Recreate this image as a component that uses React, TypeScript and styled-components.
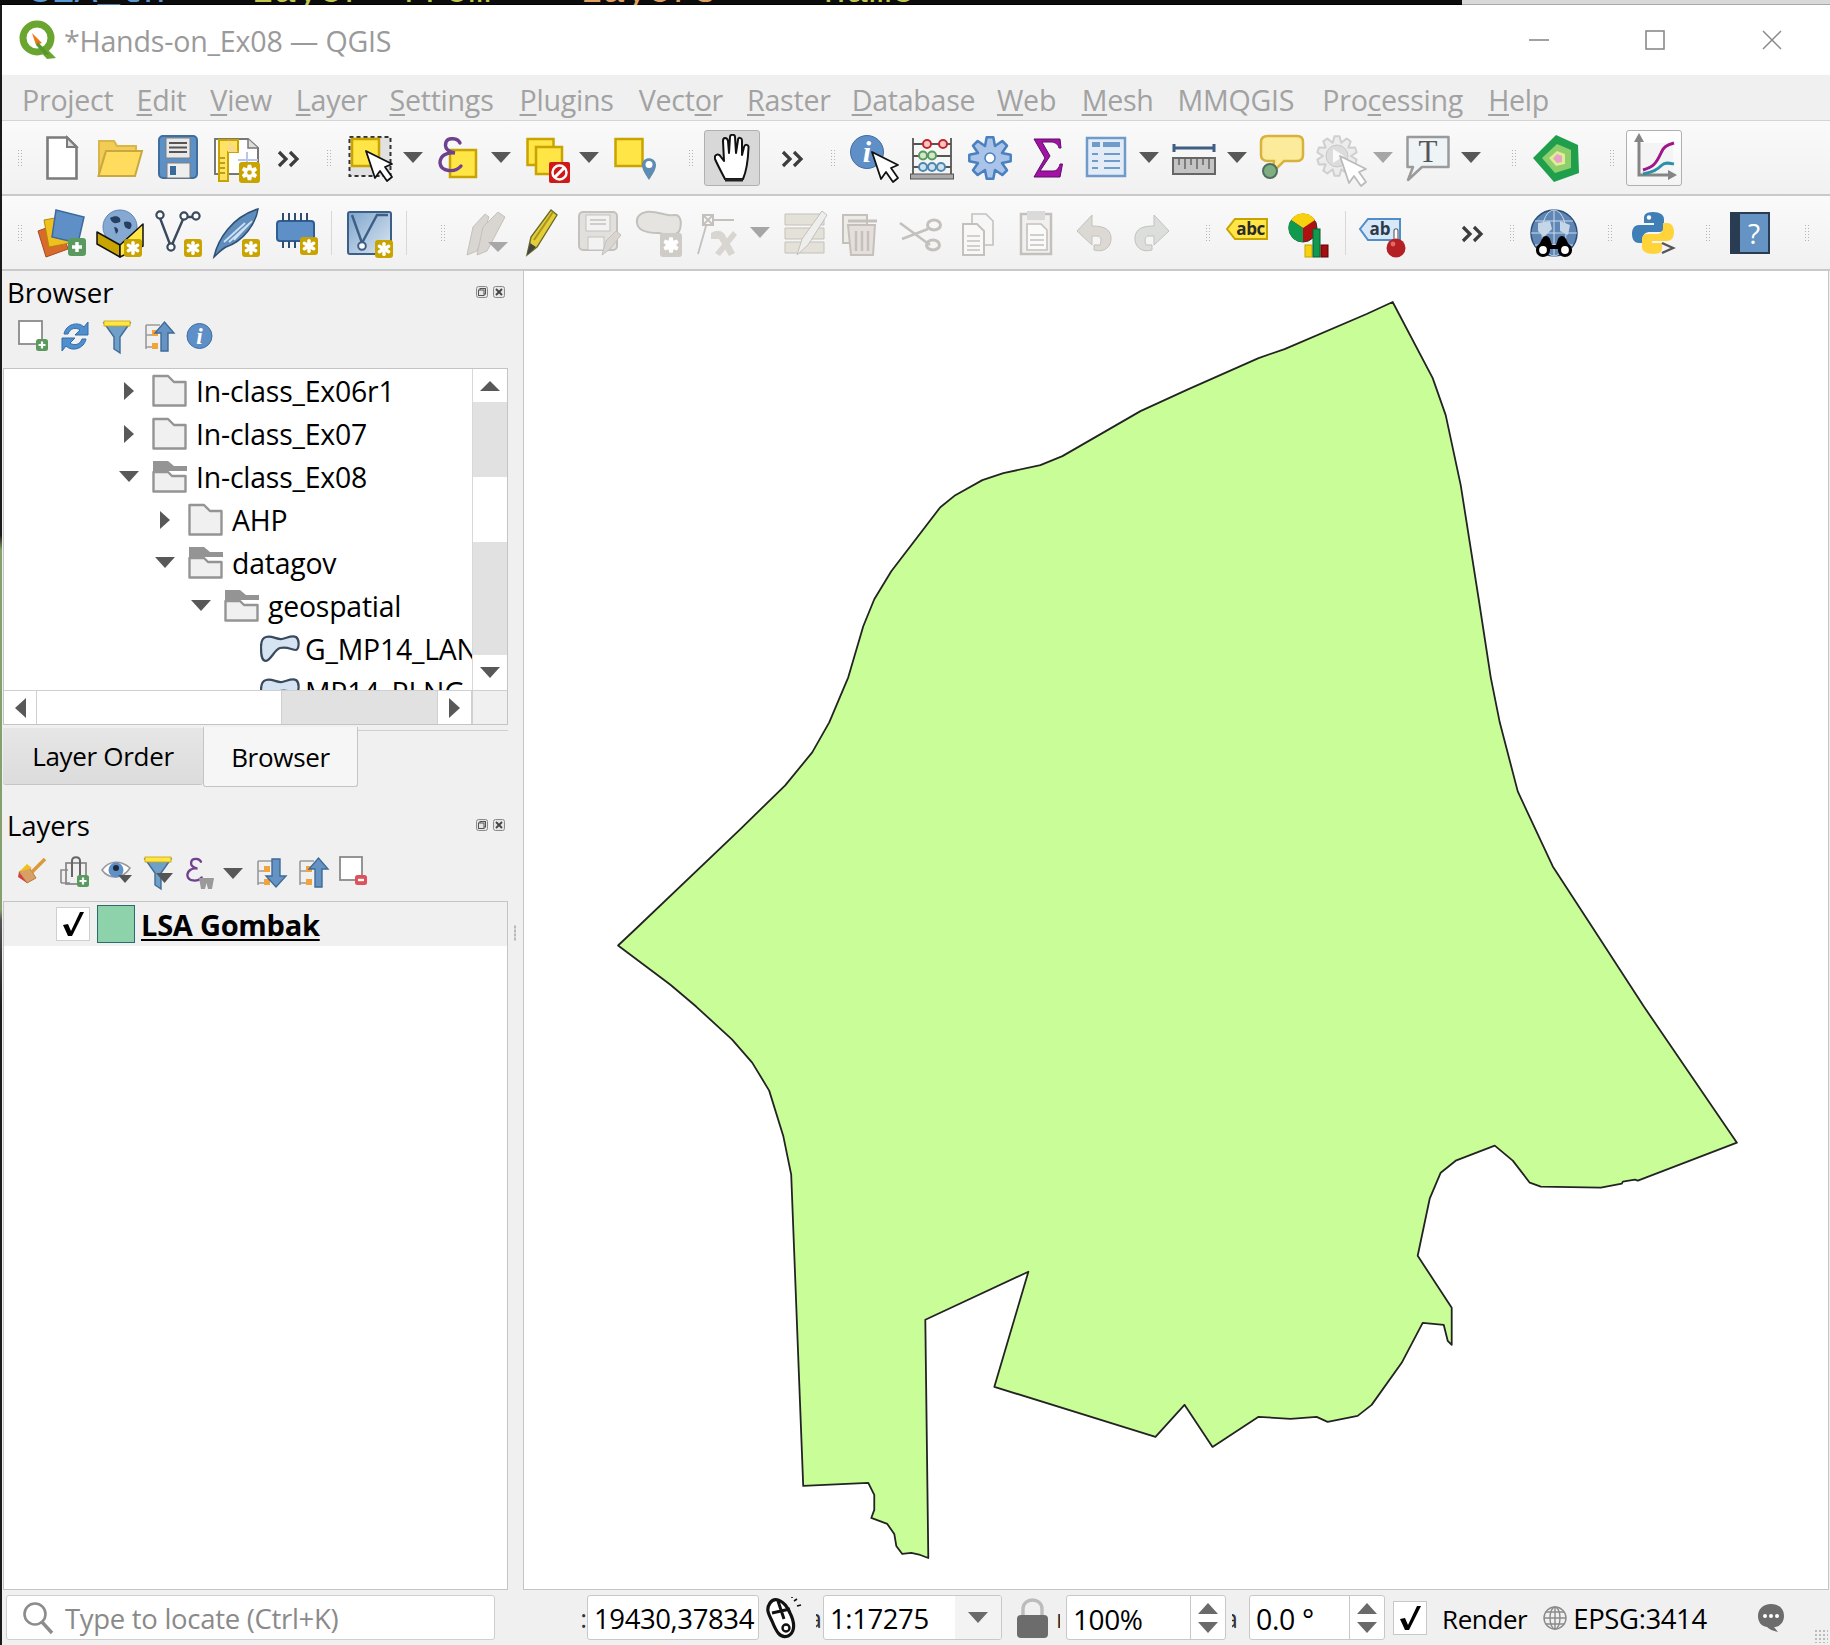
import * as React from "react";
import styled, { createGlobalStyle } from "styled-components";

const FONT = `"Open Sans", "Noto Sans", sans-serif`;

const GlobalStyle = createGlobalStyle`
  html, body { margin: 0; padding: 0; background: #f0f0f0; }
  * { box-sizing: border-box; }
`;

const Screen = styled.div`
  width: 1830px;
  height: 1645px;
  display: flex;
  flex-direction: column;
  overflow: hidden;
  font-family: ${FONT};
  color: #000;
`;

const TopStrip = styled.div`
  height: 5px;
  display: flex;
  overflow: hidden;
  flex: none;
`;

const TerminalPeek = styled.div`
  width: 1462px;
  background: #0c0c0c;
  display: flex;
  font-family: "Liberation Mono", monospace;
  font-size: 38px;
  line-height: 38px;
  white-space: pre;
  border-bottom: 1px solid #000;
`;

const PeekWord = styled.span<{ $color: string; $gap: number }>`
  color: ${(p) => p.$color};
  margin-top: -27px;
  margin-left: ${(p) => p.$gap}px;
`;

const DesktopPeek = styled.div`
  flex: 1;
  background: #d9d9d9;
  border-bottom: 1px solid #a8a8a8;
`;

const Body = styled.div`
  flex: 1;
  display: flex;
  min-height: 0;
`;

const LeftEdge = styled.div`
  width: 2px;
  flex: none;
  background: linear-gradient(
    #1a1a1a 0,
    #1a1a1a 530px,
    #86a06c 545px,
    #86a06c 905px,
    #555 915px,
    #1a1a1a 1000px
  );
`;

const Window = styled.div`
  flex: 1;
  display: flex;
  flex-direction: column;
  min-width: 0;
  background: #f0f0f0;
`;

const TitleBar = styled.div`
  height: 70px;
  flex: none;
  background: #fff;
  display: flex;
  align-items: center;
  padding-left: 16px;
`;

const TitleText = styled.div`
  margin-left: 6px;
  font-size: 28.6px;
  color: #9a9a9a;
  letter-spacing: -0.2px;
`;

const WinControls = styled.div`
  margin-left: auto;
  display: flex;
`;

const WinButton = styled.div`
  width: 116.5px;
  height: 70px;
  display: flex;
  align-items: center;
  justify-content: center;
`;

const MenuBar = styled.div`
  height: 46px;
  flex: none;
  background: #f0f0f0;
  border-bottom: 1px solid #d4d4d4;
  display: flex;
  align-items: center;
  padding-top: 3px;
`;

const MenuItem = styled.div<{ $gap: number }>`
  margin-left: ${(p) => p.$gap}px;
  font-size: 28.6px;
  letter-spacing: -0.25px;
  color: #a2a2a2;
  white-space: nowrap;
  u { text-underline-offset: 3px; text-decoration-thickness: 1.5px; }
`;

const Toolbar = styled.div<{ $h: number }>`
  height: ${(p) => p.$h}px;
  flex: none;
  display: flex;
  align-items: center;
  background: linear-gradient(#fafafa, #f1f1f1);
  border-bottom: 2px solid #c9c9c9;
`;

const Slot = styled.div<{ $w: number; $gap: number }>`
  width: ${(p) => p.$w}px;
  margin-left: ${(p) => p.$gap}px;
  flex: none;
  display: flex;
  align-items: center;
  justify-content: center;
`;

const ArrowSlot = styled(Slot)`
  height: 36px;
`;

const Handle = styled.div`
  width: 7px;
  height: 18px;
  background-image: radial-gradient(#b4b4b4 0.8px, transparent 1px);
  background-size: 3px 3px;
`;

const ToolSep = styled.div`
  width: 1px;
  height: 44px;
  background: #d8d8d8;
`;

const DropArrow = styled.div<{ $off?: boolean }>`
  width: 0;
  height: 0;
  border-left: 10px solid transparent;
  border-right: 10px solid transparent;
  border-top: 11px solid ${(p) => (p.$off ? "#a6a6a6" : "#585858")};
`;

const PressedButton = styled.div<{ $active?: boolean }>`
  width: 56px;
  height: 56px;
  border: 1px solid #b0b0b0;
  border-radius: 3px;
  background: ${(p) => (p.$active ? "#d8d8d8" : "linear-gradient(#fff, #f4f4f4)")};
  display: flex;
  align-items: center;
  justify-content: center;
`;

const Main = styled.div`
  flex: 1;
  display: flex;
  min-height: 0;
`;

const Dock = styled.div`
  width: 521px;
  flex: none;
  display: flex;
  flex-direction: column;
  padding-left: 1px;
  position: relative;
`;

const DockGrip = styled.div`
  position: absolute;
  left: 512px;
  top: 654px;
  width: 2px;
  height: 16px;
  background-image: radial-gradient(#b8b8b8 0.8px, transparent 1px);
  background-size: 2px 4px;
`;

const DockTitle = styled.div`
  height: 47px;
  flex: none;
  width: 505px;
  display: flex;
  align-items: center;
  padding: 0 3px 6px 4px;
  font-size: 27.6px;
  letter-spacing: -0.1px;
`;

const DockButtons = styled.div`
  margin-left: auto;
  display: flex;
  gap: 5px;
`;

const DockIcons = styled.div<{ $h: number; $top: number }>`
  height: ${(p) => p.$h}px;
  padding-top: ${(p) => p.$top}px;
  flex: none;
  display: flex;
  align-items: flex-start;
`;

const TreeFrame = styled.div`
  width: 505px;
  height: 357px;
  flex: none;
  border: 1px solid #c4c4c4;
  background: #fff;
  display: grid;
  grid-template-columns: 1fr 35px;
  grid-template-rows: 321px 1fr;
`;

const TreeView = styled.div`
  overflow: hidden;
`;

const TreeRow = styled.div<{ $level: number }>`
  height: 43px;
  display: flex;
  align-items: center;
  padding-left: ${(p) => 115 + p.$level * 36}px;
  font-size: 28.4px;
  letter-spacing: -0.2px;
  white-space: nowrap;
  svg { flex: none; }
`;

const ExpandCell = styled.div`
  width: 20px;
  flex: none;
  display: flex;
  justify-content: center;
  margin-right: 13px;
`;

const ArrowRight = styled.div`
  border-top: 9px solid transparent;
  border-bottom: 9px solid transparent;
  border-left: 10px solid #585858;
`;

const ArrowDown = styled.div`
  border-left: 10px solid transparent;
  border-right: 10px solid transparent;
  border-top: 11px solid #585858;
`;

const RowLabel = styled.span`
  margin-left: 9px;
`;

const LeafLabel = styled.span`
  margin-left: 4px;
`;

const ScrollColumn = styled.div`
  display: flex;
  flex-direction: column;
  border-left: 1px solid #d8d8d8;
`;

const ScrollRow = styled.div`
  display: flex;
  border-top: 1px solid #cfcfcf;
`;

const ScrollPart = styled.div<{ $size: number; $horizontal?: boolean; $grey?: boolean }>`
  flex: none;
  ${(p) => (p.$horizontal ? `width: ${p.$size}px; border-right: 1px solid #d0d0d0;` : `height: ${p.$size}px;`)}
  background: ${(p) => (p.$grey ? "#e1e1e1" : "#fff")};
  display: flex;
  align-items: center;
  justify-content: center;
`;

const ArrowUp = styled.div`
  border-left: 10px solid transparent;
  border-right: 10px solid transparent;
  border-bottom: 10px solid #585858;
`;

const ArrowLeft = styled.div`
  border-top: 10px solid transparent;
  border-bottom: 10px solid transparent;
  border-right: 11px solid #585858;
`;

const ArrowSmallRight = styled(ArrowLeft)`
  border-right: 0;
  border-left: 11px solid #585858;
`;

const ScrollCorner = styled.div`
  background: #f0f0f0;
  border-top: 1px solid #cfcfcf;
  border-left: 1px solid #d0d0d0;
`;

const TabBar = styled.div`
  height: 60px;
  margin-top: 2px;
  width: 505px;
  flex: none;
  display: flex;
`;

const Tab = styled.div<{ $active?: boolean; $w: number }>`
  width: ${(p) => p.$w}px;
  height: ${(p) => (p.$active ? 60 : 57)}px;
  margin-top: ${(p) => (p.$active ? 0 : 1)}px;
  display: flex;
  align-items: center;
  justify-content: center;
  font-size: 26px;
  letter-spacing: -0.3px;
  background: ${(p) => (p.$active ? "#f6f6f6" : "linear-gradient(#e6e6e6, #dcdcdc)")};
  border: 1px solid #c4c4c4;
  border-width: ${(p) => (p.$active ? "0 1px 1px 1px" : "0 0 1px 0")};
  border-radius: 0 0 3px 3px;
`;

const TabFill = styled.div`
  flex: 1;
  height: 4px;
  border-bottom: 1px solid #cfcfcf;
`;

const SplitterRow = styled.div`
  height: 17px;
  flex: none;
  width: 505px;
  display: flex;
  justify-content: center;
  padding-top: 8px;
`;

const SplitterDots = styled.div`
  width: 24px;
  height: 2px;
  background-image: radial-gradient(#b8b8b8 0.8px, transparent 1px);
  background-size: 4px 2px;
`;

const LayerFrame = styled.div`
  width: 505px;
  flex: 1;
  background: #fff;
  border: 1px solid #c4c4c4;
`;

const LayerRow = styled.div`
  height: 44px;
  background: #f0f0f0;
  display: flex;
  align-items: center;
  padding-left: 52px;
`;

const LayerCheck = styled.div`
  width: 34px;
  height: 34px;
  background: #fff;
  border: 1px solid #cfcfcf;
  display: flex;
  align-items: center;
  justify-content: center;
`;

const LayerSwatch = styled.div`
  width: 38px;
  height: 38px;
  margin-left: 7px;
  background: #8dd2ab;
  border: 1.5px solid #2c6a70;
`;

const LayerName = styled.div`
  margin-left: 6px;
  font-weight: 700;
  font-size: 29px;
  letter-spacing: -0.25px;
  text-decoration: underline;
  text-decoration-thickness: 2px;
  text-underline-offset: 3px;
`;

const MapCanvas = styled.div`
  flex: 1;
  background: #fff;
  border: 1px solid #c4c4c4;
  border-top: 0;
  margin-right: 1px;
  min-width: 0;
`;

const MapSvg = styled.svg`
  display: block;
  width: 100%;
  height: 100%;
`;

const StatusBar = styled.div`
  height: 55px;
  flex: none;
  display: flex;
  align-items: center;
  background: #f0f0f0;
  position: relative;
`;

const Locator = styled.div`
  width: 489px;
  height: 45px;
  margin-left: 4px;
  background: #fff;
  border: 1px solid #cfcfcf;
  border-radius: 3px;
  display: flex;
  align-items: center;
  padding-left: 15px;
`;

const LocatorHint = styled.span`
  margin-left: 11px;
  margin-top: 2px;
  font-size: 27.5px;
  letter-spacing: -0.3px;
  color: #8a8a8a;
`;

const SliverLabel = styled.div<{ $gap: number; $w: number; $start?: boolean }>`
  width: ${(p) => p.$w}px;
  margin-left: ${(p) => p.$gap}px;
  overflow: hidden;
  font-size: 26px;
  display: flex;
  justify-content: ${(p) => (p.$start ? "flex-start" : "flex-end")};
  color: #333;
  flex: none;
`;

const StatusField = styled.div<{ $w: number; $gap?: number; $size?: number }>`
  width: ${(p) => p.$w}px;
  height: 45px;
  margin-left: ${(p) => p.$gap ?? 0}px;
  flex: none;
  background: #fff;
  border: 1px solid #c8c8c8;
  border-radius: 3px;
  display: flex;
  align-items: center;
  padding-left: 6px;
  font-size: ${(p) => p.$size ?? 27.5}px;
  letter-spacing: -0.4px;
  white-space: nowrap;
  overflow: hidden;
`;

const FieldText = styled.span`
  margin-top: 2px;
`;

const ComboDrop = styled.div`
  margin-left: auto;
  width: 46px;
  height: 100%;
  background: #f3f3f3;
  display: flex;
  align-items: center;
  justify-content: center;
`;

const SpinBox = styled.div`
  margin-left: auto;
  width: 35px;
  height: 100%;
  border-left: 1px solid #c8c8c8;
  display: flex;
  flex-direction: column;
  align-items: center;
  justify-content: center;
  gap: 8px;
`;

const SpinUp = styled.div`
  border-left: 10px solid transparent;
  border-right: 10px solid transparent;
  border-bottom: 11px solid #6a6a6a;
`;

const SpinDown = styled.div`
  border-left: 10px solid transparent;
  border-right: 10px solid transparent;
  border-top: 11px solid #6a6a6a;
`;

const StatusItem = styled.div<{ $gap: number; $size?: number }>`
  margin-left: ${(p) => p.$gap}px;
  flex: none;
  display: flex;
  align-items: center;
  font-size: ${(p) => p.$size ?? 26}px;
  letter-spacing: -0.4px;
`;

const RenderCheck = styled(LayerCheck)`
  background: #fff;
  border-color: #c8c8c8;
`;

const ResizeGrip = styled.div`
  position: absolute;
  right: 2px;
  bottom: 2px;
  width: 14px;
  height: 14px;
  background-image: radial-gradient(#bbb 0.8px, transparent 1px);
  background-size: 4px 4px;
`;

/* ---------- drawn icons ---------- */

const Ico: React.FC<{ w: number; h?: number; children: React.ReactNode }> = ({ w, h = 48, children }) => (
  <svg width={w} height={h} viewBox={`0 0 ${w} ${h}`} style={{ overflow: "visible", display: "block" }}>
    {children}
  </svg>
);

const Badge: React.FC<{ x: number; y: number; s?: number }> = ({ x, y, s = 18 }) => (
  <g transform={`translate(${x} ${y})`}>
    <rect width={s} height={s} rx={3} fill="#c9a400" />
    <g stroke="#fff" strokeWidth={s * 0.19} strokeLinecap="round">
      <line x1={s / 2} y1={s * 0.2} x2={s / 2} y2={s * 0.8} />
      <line x1={s * 0.24} y1={s * 0.35} x2={s * 0.76} y2={s * 0.65} />
      <line x1={s * 0.24} y1={s * 0.65} x2={s * 0.76} y2={s * 0.35} />
    </g>
  </g>
);

const Cursor: React.FC<{ x: number; y: number; s?: number; off?: boolean }> = ({ x, y, s = 1, off }) => (
  <path
    transform={`translate(${x} ${y}) scale(${s})`}
    d="M0 0 L9 27 L14 20 L21 30 L26 26 L19 16 L26 13 Z"
    fill="#fff"
    stroke={off ? "#bbb" : "#111"}
    strokeWidth={1.8}
    strokeLinejoin="round"
  />
);

const gearPath = (cx: number, cy: number, r1: number, r2: number, n: number) => {
  const pts: string[] = [];
  const step = (Math.PI * 2) / n;
  for (let i = 0; i < n; i++) {
    const a = i * step - Math.PI / 2;
    [
      [-0.5, r1],
      [-0.2, r2],
      [0.2, r2],
      [0.5, r1],
    ].forEach(([o, r]) => {
      const t = a + o * step;
      pts.push(`${(cx + Math.cos(t) * r).toFixed(1)} ${(cy + Math.sin(t) * r).toFixed(1)}`);
    });
  }
  return `M${pts.join(" L")} Z`;
};

const Chevrons = () => (
  <Ico w={22}>
    <path d="M2 18 L9 25 L2 32 M13 18 L20 25 L13 32" fill="none" stroke="#3c3c3c" strokeWidth={3.2} />
  </Ico>
);

const QgisLogo = () => (
  <svg width={40} height={40} viewBox="0 0 40 40">
    <circle cx={19} cy={18} r={14} fill="none" stroke="#6aa52f" strokeWidth={7} />
    <path d="M26 26 L38 38 L29 39 L20 29 Z" fill="#6aa52f" />
    <path d="M14 13 L24 23 L18 25 Z" fill="#ee7913" />
    <path d="M20 22 L31 34 L27 35 L18 25 Z" fill="#589632" />
  </svg>
);

const NewIcon = () => (
  <Ico w={32}>
    <path d="M1.5 3.5 H21 L30.5 13 V44.5 H1.5 Z" fill="#fff" stroke="#7b7b7b" strokeWidth={2.6} />
    <path d="M21 3.5 V13 H30.5 Z" fill="#ddd" stroke="#7b7b7b" strokeWidth={2} />
  </Ico>
);

const OpenIcon = () => (
  <Ico w={46}>
    <path d="M2 41 V7 H17 L20 12 H39 V20 H8 Z" fill="#f2cc55" stroke="#d8b648" strokeWidth={2} />
    <path d="M1.5 42 L9 17 H45 L38 42 Z" fill="#ffdb5e" stroke="#c9a840" strokeWidth={2} />
  </Ico>
);

const SaveIcon = () => (
  <Ico w={40}>
    <rect x={1} y={2} width={38} height={42} rx={4} fill="#5d90c5" stroke="#3f6d9d" strokeWidth={2} />
    <rect x={8} y={4} width={24} height={20} fill="#e9e9e9" stroke="#7e7e7e" />
    <path d="M11 9 H29 M11 13.5 H29 M11 18 H29" stroke="#555" strokeWidth={1.8} />
    <rect x={9} y={29} width={23} height={15} fill="#eee" stroke="#7e7e7e" />
    <rect x={12} y={32} width={6} height={9} fill="#3a6a9a" />
  </Ico>
);

const LayoutIcon = () => (
  <Ico w={46}>
    <path d="M1 5 H34 L44 14 V40 H1 Z" fill="#fff" stroke="#777" strokeWidth={2} />
    <path d="M34 5 V14 H44" fill="#ddd" stroke="#777" strokeWidth={1.5} />
    <path d="M5 6 H24 V18 H14 V47 H5 Z" fill="#ffe163" stroke="#c9a400" strokeWidth={2} />
    <path d="M14 6 L24 18 H14 Z" fill="#f9d98a" />
    <path d="M6 24 H11 M6 29 H11 M6 34 H11 M6 39 H11" stroke="#a88a00" strokeWidth={1.4} />
    <path d="M33 18 V30 M24 26 H44" stroke="#b8c6ee" strokeWidth={2} />
    <g transform="translate(25 28)">
      <rect width={21} height={21} rx={3} fill="#c9a400" />
      <path d={gearPath(10.5, 10.5, 5, 8, 6)} fill="#fff" />
      <circle cx={10.5} cy={10.5} r={2.3} fill="#c9a400" />
    </g>
  </Ico>
);

const SelectIcon = () => (
  <Ico w={45}>
    <rect x={1.5} y={3} width={41} height={39} fill="#e1e1e1" stroke="#333" strokeWidth={2} strokeDasharray="4 3" />
    <rect x={4} y={5} width={27} height={27} fill="#ffe545" stroke="#c8a400" strokeWidth={2.5} />
    <Cursor x={18} y={17} />
  </Ico>
);

const Epsilon: React.FC = () => (
  <path
    d="M22 7 C20 2 10 1 8 6 C6 12 10 16 17 17 C8 16 2 20 2 27 C3 36 17 37 23 30"
    fill="none"
    stroke="#6f4090"
    strokeWidth={3.4}
    strokeLinecap="round"
  />
);

const ExprSelectIcon = () => (
  <Ico w={40}>
    <rect x={12} y={16} width={26} height={27} fill="#ffe545" stroke="#c8a400" strokeWidth={2.5} />
    <g transform="translate(0 2)">
      <Epsilon />
    </g>
  </Ico>
);

const DeselectIcon = () => (
  <Ico w={44}>
    <rect x={1.5} y={5} width={26} height={26} fill="#ffe545" stroke="#c8a400" strokeWidth={2.5} />
    <rect x={10} y={13} width={26} height={27} fill="#ffe545" stroke="#c8a400" strokeWidth={2.5} />
    <rect x={23} y={28} width={21} height={21} rx={2} fill="#d01818" />
    <circle cx={33.5} cy={38.5} r={7} fill="none" stroke="#fff" strokeWidth={2.5} />
    <line x1={29} y1={43} x2={38} y2={34} stroke="#fff" strokeWidth={3} />
  </Ico>
);

const LocationSelectIcon = () => (
  <Ico w={42}>
    <rect x={1.5} y={5} width={27} height={27} fill="#ffe545" stroke="#c8a400" strokeWidth={2.5} />
    <path d="M35 46 C32 41 28 36 28 31 C28 22 42 22 42 31 C42 36 38 41 35 46 Z" fill="#5f8cb2" />
    <circle cx={35} cy={30.5} r={3.5} fill="#fff" />
  </Ico>
);

const HandIcon = () => (
  <svg width={36} height={48} viewBox="0 0 36 48">
    <path
      d="M11 45 C8 39 4 32 1 25 C0 20 5 19 7 23 L10 27 L9 7 C9 3 13 3 14 7 L15 19 L16 3 C16 0 21 0 21 3 L22 19 L24 6 C24 3 28 3 28 7 L28 21 L30 13 C31 10 35 10 34.5 14 C34 26 33 36 29 45 Z"
      fill="#fff"
      stroke="#111"
      strokeWidth={2}
      strokeLinejoin="round"
    />
    <path d="M11 46 H29" stroke="#222" strokeWidth={3} />
  </svg>
);

const InfoIcon = () => (
  <Ico w={48}>
    <circle cx={17} cy={18} r={16.5} fill="#5e8fc7" stroke="#3f6ea3" />
    <text x={17} y={28} textAnchor="middle" fontFamily="Liberation Serif, serif" fontStyle="italic" fontWeight={700} fontSize={30} fill="#fff">
      i
    </text>
    <Cursor x={22} y={18} />
  </Ico>
);

const AbacusIcon = () => (
  <Ico w={44}>
    <path d="M3 4 V44 M41 4 V44 M3 10 H41 M3 22 H41 M3 33 H41" stroke="#555" strokeWidth={1.8} />
    <g fill="none" strokeWidth={2}>
      <circle cx={17} cy={10} r={4} stroke="#c0272d" fill="#f6c6c6" />
      <circle cx={33} cy={10} r={4} stroke="#c0272d" fill="#f6c6c6" />
      <circle cx={13} cy={21.5} r={4} stroke="#5c9a5c" fill="#cfe8cf" />
      <circle cx={22} cy={21.5} r={4} stroke="#5c9a5c" fill="#cfe8cf" />
      <circle cx={13} cy={33} r={4} stroke="#4c88b0" fill="#cfe2f0" />
      <circle cx={22} cy={33} r={4} stroke="#4c88b0" fill="#cfe2f0" />
      <circle cx={31} cy={33} r={4} stroke="#4c88b0" fill="#cfe2f0" />
    </g>
    <rect x={0.5} y={40} width={43} height={5} fill="#aaa" stroke="#555" />
  </Ico>
);

const GearIcon = () => (
  <Ico w={44}>
    <path d={gearPath(22, 24, 13, 21, 8)} fill="#a9c4e8" stroke="#4a7fc0" strokeWidth={2.5} strokeLinejoin="round" />
    <circle cx={22} cy={24} r={5} fill="#fff" stroke="#4a7fc0" strokeWidth={1.5} />
  </Ico>
);

const SigmaIcon = () => (
  <Ico w={30}>
    <path
      d="M1 5 H27 L28 14 H26 C25 10 22 8 18 8 H9 L17 22 L7 37 H20 C24 37 26 34 27 30 H29.5 L27 43 H1 L12 24 Z"
      fill="#a312a3"
      stroke="#5c0c6c"
      strokeWidth={1}
    />
  </Ico>
);

const TableIcon = () => (
  <Ico w={40}>
    <rect x={1} y={4} width={38} height={38} fill="#e3ecf6" stroke="#6f9bcb" strokeWidth={2.5} />
    <rect x={6} y={8} width={8} height={5} fill="#6f9bcb" />
    <rect x={17} y={8} width={17} height={5} fill="#6f9bcb" />
    <path d="M6 20 H12 M18 20 H34 M6 27 H12 M18 27 H34 M6 34 H12 M18 34 H34" stroke="#6f9bcb" strokeWidth={2} />
  </Ico>
);

const RulerIcon = () => (
  <Ico w={44}>
    <path d="M2 14 H42 M2 10 V18 M42 10 V18" stroke="#3f5f82" strokeWidth={3} fill="none" />
    <rect x={1} y={24} width={42} height={16} fill="#c4c4c4" stroke="#666" strokeWidth={2} />
    <path d="M7 24 V31 M13 24 V35 M19 24 V31 M25 24 V35 M31 24 V31 M37 24 V35" stroke="#666" strokeWidth={1.5} />
  </Ico>
);

const TipIcon = () => (
  <Ico w={44}>
    <path
      d="M8 2 H37 C41 2 43 4 43 8 V21 C43 25 41 27 37 27 H24 L13 38 L14 27 H8 C4 27 1 25 1 21 V8 C1 4 4 2 8 2 Z"
      fill="#fdeb9c"
      stroke="#d8b23c"
      strokeWidth={2.5}
    />
    <circle cx={10} cy={37} r={7} fill="#7fae80" stroke="#4f6f5f" strokeWidth={2} />
  </Ico>
);

const RunActionIcon = () => (
  <Ico w={48}>
    <path d={gearPath(20, 22, 14, 20, 10)} fill="#ececec" stroke="#cfcfcf" strokeWidth={2} strokeLinejoin="round" />
    <circle cx={20} cy={22} r={11} fill="#dcdcdc" stroke="#c8c8c8" />
    <path d="M16 15 L27 22 L16 29 Z" fill="#fafafa" />
    <Cursor x={23} y={22} off />
  </Ico>
);

const TextAnnotIcon = () => (
  <Ico w={44}>
    <path d="M1.5 3 H42.5 V33 H16 L2 46 L7 33 H1.5 Z" fill="#eef3f6" stroke="#9a9a9a" strokeWidth={2.5} strokeLinejoin="round" />
    <text x={22} y={28} textAnchor="middle" fontFamily="Liberation Serif, serif" fontSize={31} fill="#555">
      T
    </text>
  </Ico>
);

const PentagonIcon = () => (
  <Ico w={48}>
    <path d="M24 1 L46 11 L47 39 L22 48 L1 24 Z" fill="#1f9e4c" />
    <path d="M25 10 L39 16 L39 34 L23 39 L10 24 Z" fill="#8fce6c" />
    <path d="M25 17 L33 20 L33 30 L24 32 L17 24 Z" fill="#dfee90" />
    <path d="M25 20 L30 22 L30 28 L25 29 L21 24.5 Z" fill="#e7a3c8" />
  </Ico>
);

const ChartIcon = () => (
  <svg width={46} height={50} viewBox="0 0 46 50">
    <rect x={8} y={10} width={34} height={32} fill="#f4f4f4" />
    <path d="M8 4 V42 H42" fill="none" stroke="#858585" strokeWidth={3} />
    <path d="M8 0 L3 9 H13 Z M46 42 L37 37 V47 Z" fill="#858585" />
    <path d="M12 37 C22 34 25 31 30 20 C32 14 36 12 43 10" fill="none" stroke="#a0148c" strokeWidth={3} />
    <path d="M12 41 C22 39 26 37 31 32 C34 29 38 30 43 31" fill="none" stroke="#2a92a8" strokeWidth={3} />
  </svg>
);

/* toolbar two */

const DataSourceIcon = () => (
  <Ico w={48}>
    <path d="M0 22 L22 14 L30 40 L8 48 Z" fill="#d86a2c" stroke="#a44c20" />
    <path d="M6 11 L28 7 L32 34 L11 38 Z" fill="#f0c020" stroke="#b08c00" />
    <path d="M18 1 L46 8 L40 34 L14 28 Z" fill="#5e8fc7" stroke="#3c6a9e" strokeWidth={1.5} />
    <rect x={30} y={29} width={18} height={18} rx={3} fill="#5b9a5f" />
    <path d="M39 33 V43 M34 38 H44" stroke="#fff" strokeWidth={3.4} />
  </Ico>
);

const GeoPackageIcon = () => (
  <Ico w={48}>
    <circle cx={24} cy={18} r={17} fill="#85a9d2" stroke="#5f86b4" />
    <path d="M14 9 C20 5 26 8 24 13 C20 15 16 15 14 9 Z M28 13 C34 11 38 15 34 20 C30 20 28 18 28 13 Z M18 18 C22 18 24 22 20 25 Z" fill="#26405f" />
    <path d="M1 23 L24 36 V48 L1 35 Z" fill="#c9a400" stroke="#111" strokeWidth={1.5} strokeLinejoin="round" />
    <path d="M24 36 L47 15 V37 L24 48 Z" fill="#ffe545" stroke="#111" strokeWidth={1.5} strokeLinejoin="round" />
    <Badge x={28} y={30} />
  </Ico>
);

const ShapefileIcon = () => (
  <Ico w={47}>
    <path d="M5 9 L16 38 L29 8 H41" fill="none" stroke="#3a4a5c" strokeWidth={2.4} />
    <g fill="#fff" stroke="#3a4a5c" strokeWidth={2.2}>
      <circle cx={5} cy={6} r={3.6} />
      <circle cx={16} cy={38} r={3.6} />
      <circle cx={29} cy={7} r={3.6} />
      <circle cx={41} cy={7} r={3.6} />
    </g>
    <Badge x={29} y={30} />
  </Ico>
);

const FeatherIcon = () => (
  <Ico w={48}>
    <path d="M2 48 C6 30 20 8 46 0 C44 14 32 32 14 38 C10 40 6 44 2 48 Z" fill="#5f8dbd" stroke="#2e4f72" strokeWidth={1.5} />
    <path d="M12 33 L33 14 M17 33 L38 14 M22 31 L40 12" stroke="#cfe0f0" strokeWidth={1.8} />
    <Badge x={30} y={30} />
  </Ico>
);

const ChipIcon = () => (
  <Ico w={42}>
    <rect x={1} y={12} width={37} height={20} rx={3} fill="#5e8fc7" stroke="#2f5f92" strokeWidth={2} />
    <path d="M7 4 V12 M13 4 V12 M19 4 V12 M25 4 V12 M31 4 V12 M7 32 V39 M13 32 V39 M19 32 V39" stroke="#2f4f72" strokeWidth={2} />
    <Badge x={24} y={28} />
  </Ico>
);

const MeshIcon = () => (
  <Ico w={46}>
    <defs>
      <linearGradient id="meshFill" x1="0" y1="0" x2="1" y2="1">
        <stop offset="0" stopColor="#7fa5cd" />
        <stop offset="1" stopColor="#dce7f2" />
      </linearGradient>
    </defs>
    <rect x={1} y={3} width={43} height={42} rx={2} fill="url(#meshFill)" stroke="#3d5f86" strokeWidth={2} />
    <path d="M5 6 L15 34 L30 6 H41" fill="none" stroke="#3d5f86" strokeWidth={2.4} />
    <circle cx={15} cy={37} r={3.8} fill="#fff" stroke="#3d5f86" strokeWidth={2} />
    <Badge x={28} y={31} />
  </Ico>
);

const GREY = "#d9d6d2";
const GREY_LINE = "#c4c1bd";

const EditsIcon = () => (
  <Ico w={44}>
    <path d="M2 46 L8 18 L20 5 L24 8 L12 42 Z" fill={GREY} stroke={GREY_LINE} />
    <path d="M12 46 L18 18 L33 3 L40 8 L22 42 Z" fill={GREY} stroke={GREY_LINE} />
    <path d="M23 33 H43 L33 43 Z" fill="#a8a8a8" />
  </Ico>
);

const PencilIcon = () => (
  <Ico w={33}>
    <path d="M2 46 L6 28 L26 1 L32 6 L12 38 Z" fill="#e3cf35" stroke="#6a6a2a" strokeWidth={1.4} />
    <path d="M9 31 L28 3" stroke="#a89420" strokeWidth={2} />
    <path d="M2 46 L5 34 L11 38 Z" fill="#444" />
  </Ico>
);

const SaveEditsIcon = () => (
  <Ico w={44}>
    <rect x={1} y={3} width={38} height={38} rx={4} fill="#e2e0dd" stroke={GREY_LINE} strokeWidth={2} />
    <rect x={8} y={6} width={24} height={16} fill="#f2f2f2" stroke={GREY_LINE} />
    <path d="M12 11 H28 M12 15 H28" stroke={GREY_LINE} strokeWidth={1.5} />
    <rect x={10} y={28} width={16} height={13} fill="#f2f2f2" stroke={GREY_LINE} />
    <path d="M24 46 L28 32 L38 22 L43 26 L32 40 Z" fill={GREY} stroke={GREY_LINE} />
  </Ico>
);

const DigitizeIcon = () => (
  <Ico w={46}>
    <path d="M10 3 C20 1 32 8 38 6 C44 5 46 12 44 20 C42 28 32 26 22 24 C12 24 2 22 1 14 C0 8 4 4 10 3 Z" fill="#e6e4e1" stroke={GREY_LINE} strokeWidth={2} />
    <rect x={24} y={24} width={22} height={24} rx={3} fill="#cfccc8" />
    <path d={gearPath(35, 36, 5, 8, 6)} fill="#fff" />
  </Ico>
);

const ToolsIcon = () => (
  <Ico w={38}>
    <rect x={6} y={6} width={10} height={10} fill="none" stroke={GREY_LINE} strokeWidth={2} />
    <path d="M6 6 L16 16 M16 6 L6 16 M16 11 H37 M9 17 L1 45" stroke={GREY_LINE} strokeWidth={1.8} />
    <path d="M14 24 C20 20 26 22 28 26 L38 44 L32 47 L22 30 L14 30 Z" fill={GREY} />
    <path d="M36 22 L18 44 L23 47 L40 26 Z" fill={GREY} />
  </Ico>
);

const EditTableIcon = () => (
  <Ico w={42}>
    <path d="M1 5 H40 V16 H1 Z M1 19 H40 V30 H1 Z M1 33 H40 V44 H1 Z" fill="#e4e2d8" stroke={GREY_LINE} />
    <path d="M13 46 L18 30 L38 2 L43 6 L24 36 Z" fill="#eeeeec" stroke={GREY_LINE} />
  </Ico>
);

const DeleteIcon = () => (
  <Ico w={36}>
    <rect x={1} y={6} width={24} height={28} fill="#eeeae6" stroke={GREY_LINE} strokeWidth={2} />
    <path d="M6 12 H35" stroke={GREY_LINE} strokeWidth={3} />
    <path d="M6 16 H33 L31 46 H9 Z" fill="#e6dedb" stroke={GREY_LINE} strokeWidth={2} />
    <path d="M14 22 V42 M20 22 V42 M26 22 V42" stroke={GREY_LINE} strokeWidth={2.5} />
  </Ico>
);

const ScissorsIcon = () => (
  <Ico w={42}>
    <path d="M0 14 L30 36 M2 30 L28 20" stroke={GREY_LINE} strokeWidth={2.6} />
    <ellipse cx={34} cy={16} rx={6.5} ry={5} fill="none" stroke={GREY_LINE} strokeWidth={3} />
    <ellipse cx={33} cy={36} rx={6.5} ry={5} fill="none" stroke={GREY_LINE} strokeWidth={3} />
  </Ico>
);

const CopyIcon = () => (
  <Ico w={32}>
    <path d="M10 5 H24 L31 12 V36 H10 Z" fill="#f6f6f6" stroke={GREY_LINE} strokeWidth={1.6} />
    <path d="M1 15 H15 L22 22 V46 H1 Z" fill="#f8f8f8" stroke={GREY_LINE} strokeWidth={2} />
    <path d="M5 27 H18 M5 32 H18 M5 37 H18 M5 41 H18" stroke={GREY_LINE} strokeWidth={1.5} />
  </Ico>
);

const PasteIcon = () => (
  <Ico w={32}>
    <rect x={1} y={5} width={30} height={40} fill="#f1f0ef" stroke={GREY_LINE} strokeWidth={2.5} />
    <rect x={7} y={2} width={18} height={9} fill="#dadada" />
    <path d="M7 15 H21 L27 21 V41 H7 Z" fill="#fafafa" stroke={GREY_LINE} strokeWidth={1.6} />
    <path d="M10 26 H24 M10 31 H24 M10 36 H24" stroke={GREY_LINE} strokeWidth={1.4} />
  </Ico>
);

const UndoIcon = () => (
  <Ico w={36}>
    <path d="M16 6 L1 22 L16 36 V27 H21 C25 27 26 31 24 36 H18 V41 C28 44 36 38 35 28 C34 20 28 17 16 17 Z" fill="#dcd9d5" stroke={GREY_LINE} />
  </Ico>
);

const RedoIcon = () => (
  <Ico w={36}>
    <path d="M20 6 L35 22 L20 36 V27 H15 C11 27 10 31 12 36 H18 V41 C8 44 0 38 1 28 C2 20 8 17 20 17 Z" fill="#dcdedb" stroke={GREY_LINE} />
  </Ico>
);

const AbcIcon = () => (
  <Ico w={42}>
    <path d="M9 10 H41 V30 H9 L1 20 Z" fill="#ffe545" stroke="#c8a400" strokeWidth={2} />
    <text x={24.5} y={26} textAnchor="middle" fontFamily={FONT} fontWeight={700} fontSize={17} letterSpacing={-0.5} fill="#2b2b2b">
      abc
    </text>
  </Ico>
);

const DiagramIcon = () => (
  <Ico w={40}>
    <circle cx={15} cy={19} r={14} fill="#b01010" stroke="#333" strokeWidth={1} />
    <path d="M15 19 L3 11 A14 14 0 0 1 27 11 Z" fill="#f7d010" />
    <path d="M15 19 L3 11 A14 14 0 0 0 15 33 Z" fill="#109a50" />
    <rect x={17} y={36} width={7} height={12} fill="#f7d010" stroke="#c8a400" />
    <rect x={25} y={20} width={7} height={28} fill="#109a50" stroke="#0a5c30" />
    <rect x={33} y={36} width={7} height={12} fill="#a01010" stroke="#600" />
  </Ico>
);

const AbPinIcon = () => (
  <Ico w={47}>
    <path d="M9 10 H41 V31 H9 L1 20 Z" fill="#d8e8f8" stroke="#4f8ec8" strokeWidth={2} />
    <text x={21} y={26} textAnchor="middle" fontFamily={FONT} fontWeight={700} fontSize={17} fill="#2b3b4b">
      ab
    </text>
    <path d="M35 33 V22 C35 19 39 19 39 22 V33" fill="#fff" stroke="#666" strokeWidth={1.2} />
    <circle cx={37} cy={39} r={9.5} fill="#b52025" />
    <circle cx={34} cy={35} r={2.4} fill="#e06a6a" />
  </Ico>
);

const Binoculars = () => (
  <g>
    <path d="M12 30 C14 26 18 26 20 30 L22 36 H26 L28 30 C30 26 34 26 36 30 L41 40 H7 Z" fill="#000" />
    <circle cx={13} cy={41} r={5.5} fill="#fff" stroke="#000" strokeWidth={3.2} />
    <circle cx={35} cy={41} r={5.5} fill="#fff" stroke="#000" strokeWidth={3.2} />
  </g>
);

const GlobeIcon = () => (
  <Ico w={48}>
    <circle cx={24} cy={24} r={23} fill="#5f86b4" stroke="#2c4f78" strokeWidth={1.5} />
    <path d="M1 24 H47 M24 1 V47 M5 12 H43 M5 36 H43" stroke="#cfdcec" strokeWidth={1} />
    <ellipse cx={24} cy={24} rx={12} ry={23} fill="none" stroke="#cfdcec" strokeWidth={1} />
    <path d="M8 14 L20 12 L22 20 L14 28 L8 22 Z M30 12 L40 16 L38 26 L30 22 Z" fill="#c5d6e8" />
    <Binoculars />
  </Ico>
);

const PythonIcon = () => (
  <Ico w={42}>
    <g transform="translate(0 3)">
      <path d="M21 0 C12 0 12 4 12 7 V11 H22 V13 H7 C2 13 0 17 0 22 C0 28 3 31 7 31 H11 V26 C11 22 14 20 18 20 H27 C30 20 32 18 32 15 V7 C32 3 28 0 21 0 Z" fill="#3f7fb5" />
      <circle cx={17} cy={5.5} r={2.2} fill="#fff" />
      <path transform="rotate(180 21 21)" d="M21 0 C12 0 12 4 12 7 V11 H22 V13 H7 C2 13 0 17 0 22 C0 28 3 31 7 31 H11 V26 C11 22 14 20 18 20 H27 C30 20 32 18 32 15 V7 C32 3 28 0 21 0 Z" fill="#ffd43b" />
      <path d="M30 31 L41 36 L30 41" fill="none" stroke="#555" strokeWidth={2.4} />
    </g>
  </Ico>
);

const HelpIcon = () => (
  <Ico w={40}>
    <rect x={0} y={3} width={40} height={42} fill="#2a3c52" />
    <rect x={10} y={5} width={28} height={38} fill="#6594c4" />
    <text x={24} y={35} textAnchor="middle" fontFamily={FONT} fontSize={28} fill="#fff">
      ?
    </text>
  </Ico>
);

/* dock icons */

const Small: React.FC<{ w: number; gap: number; children: React.ReactNode }> = ({ w, gap, children }) => (
  <Slot $w={w} $gap={gap}>
    <svg width={w} height={36} viewBox={`0 0 ${w} 36`} style={{ overflow: "visible", display: "block" }}>
      {children}
    </svg>
  </Slot>
);

const PlusBadge: React.FC<{ x: number; y: number; minus?: boolean }> = ({ x, y, minus }) => (
  <g transform={`translate(${x} ${y})`}>
    <rect width={12} height={minus ? 10 : 12} rx={2.5} fill={minus ? "#e0505a" : "#5b9a5f"} />
    {minus ? (
      <path d="M3 5 H9" stroke="#fff" strokeWidth={2.4} />
    ) : (
      <path d="M6 2.5 V9.5 M2.5 6 H9.5" stroke="#fff" strokeWidth={2.2} />
    )}
  </g>
);

const TreeArrowsIcon: React.FC<{ down?: boolean }> = ({ down }) => (
  <>
    <path d="M2 6 H16 M2 6 V30 M2 16 H10 M2 28 H10" stroke="#9a9a9a" strokeWidth={1.6} fill="none" />
    <rect x={8} y={11} width={6} height={6} fill="#f2a33a" />
    <rect x={8} y={24} width={6} height={6} fill="#f2a33a" />
    <path
      d={down ? "M16 4 H24 V21 H30 L20 32 L10 21 H16 Z" : "M17 32 H24 V14 H30 L20.5 3 L11 14 H17 Z"}
      fill="#6594c4"
      stroke="#3f6a98"
      strokeWidth={1.4}
    />
  </>
);

const FunnelShape: React.FC<{ withArrow?: boolean }> = ({ withArrow }) => (
  <>
    <path d="M1 4 H27 L17 18 V34 L11 30 V18 Z" fill="#6fa0c8" stroke="#3f6a98" strokeWidth={1.4} />
    <rect x={1} y={2} width={26} height={5} fill="#ffe545" stroke="#c8a400" strokeWidth={0.8} />
    {withArrow && <path d="M12 18 H29 L20.5 28 Z" fill="#555" />}
  </>
);

const FloatCloseButtons = () => (
  <DockButtons>
    <svg width={12} height={12} viewBox="0 0 12 12">
      <rect x={0.5} y={0.5} width={11} height={11} rx={2} fill="#e6e6e6" stroke="#8a8a8a" />
      <rect x={4} y={2.5} width={5.5} height={5.5} fill="none" stroke="#555" />
      <rect x={2.5} y={4} width={5.5} height={5.5} fill="#e6e6e6" stroke="#555" />
    </svg>
    <svg width={12} height={12} viewBox="0 0 12 12">
      <rect x={0.5} y={0.5} width={11} height={11} rx={2} fill="#e6e6e6" stroke="#8a8a8a" />
      <path d="M3 3 L9 9 M9 3 L3 9" stroke="#444" strokeWidth={1.8} />
    </svg>
  </DockButtons>
);

const FolderClosed = () => (
  <svg width={35} height={33} viewBox="0 0 35 33">
    <path d="M1.5 30 V2 L16 2 L22 8 H33.5 V31.5 H1.5 Z" fill="#f0f0f0" stroke="#949494" strokeWidth={2.4} strokeLinejoin="round" />
  </svg>
);

const FolderOpen = () => (
  <svg width={35} height={33} viewBox="0 0 35 33">
    <path d="M1 1 H16 L22 6 H35 V11 H1 Z" fill="#949494" />
    <path d="M1.5 12 H16 L20 16 H33.5 V31.5 H1.5 Z" fill="#f0f0f0" stroke="#949494" strokeWidth={2.4} strokeLinejoin="round" />
  </svg>
);

const PolygonLeaf = () => (
  <svg width={41} height={28} viewBox="0 0 41 28">
    <path
      d="M6 2 C12 0 17 5 22 4 C27 3 32 0 36 2 C40 5 39 14 36 15 C32 15 27 11 20 13 C14 15 12 24 6 26 C1 26 1 18 1 12 C1 7 2 3 6 2 Z"
      fill="#d5e3f2"
      stroke="#3a4a5c"
      strokeWidth={2.2}
    />
  </svg>
);

const Check: React.FC<{ s?: number }> = ({ s = 26 }) => (
  <svg width={s} height={s} viewBox="0 0 26 26">
    <path d="M3 14 L8 13 L11 20 L20 1 L24 1 L12 25 L8 25 Z" fill="#000" />
  </svg>
);

/* ---------- data ---------- */

type Placed = { at: number; w: number; node: React.ReactNode };

const row1: Placed[] = [
  { at: 17, w: 7, node: <Handle /> },
  { at: 46, w: 32, node: <NewIcon /> },
  { at: 97, w: 46, node: <OpenIcon /> },
  { at: 158, w: 40, node: <SaveIcon /> },
  { at: 214, w: 46, node: <LayoutIcon /> },
  { at: 277, w: 22, node: <Chevrons /> },
  { at: 326, w: 7, node: <Handle /> },
  { at: 348, w: 45, node: <SelectIcon /> },
  { at: 403, w: 20, node: <DropArrow /> },
  { at: 438, w: 40, node: <ExprSelectIcon /> },
  { at: 491, w: 20, node: <DropArrow /> },
  { at: 526, w: 44, node: <DeselectIcon /> },
  { at: 579, w: 20, node: <DropArrow /> },
  { at: 614, w: 42, node: <LocationSelectIcon /> },
  { at: 688, w: 7, node: <Handle /> },
  { at: 704, w: 56, node: <PressedButton $active><HandIcon /></PressedButton> },
  { at: 781, w: 22, node: <Chevrons /> },
  { at: 830, w: 7, node: <Handle /> },
  { at: 850, w: 48, node: <InfoIcon /> },
  { at: 910, w: 44, node: <AbacusIcon /> },
  { at: 968, w: 44, node: <GearIcon /> },
  { at: 1033, w: 30, node: <SigmaIcon /> },
  { at: 1086, w: 40, node: <TableIcon /> },
  { at: 1139, w: 20, node: <DropArrow /> },
  { at: 1172, w: 44, node: <RulerIcon /> },
  { at: 1227, w: 20, node: <DropArrow /> },
  { at: 1260, w: 44, node: <TipIcon /> },
  { at: 1317, w: 48, node: <RunActionIcon /> },
  { at: 1373, w: 20, node: <DropArrow $off /> },
  { at: 1406, w: 44, node: <TextAnnotIcon /> },
  { at: 1461, w: 20, node: <DropArrow /> },
  { at: 1511, w: 7, node: <Handle /> },
  { at: 1532, w: 48, node: <PentagonIcon /> },
  { at: 1609, w: 7, node: <Handle /> },
  { at: 1626, w: 56, node: <PressedButton><ChartIcon /></PressedButton> },
];

const row2: Placed[] = [
  { at: 17, w: 7, node: <Handle /> },
  { at: 38, w: 48, node: <DataSourceIcon /> },
  { at: 96, w: 48, node: <GeoPackageIcon /> },
  { at: 155, w: 47, node: <ShapefileIcon /> },
  { at: 212, w: 48, node: <FeatherIcon /> },
  { at: 276, w: 42, node: <ChipIcon /> },
  { at: 331, w: 1, node: <ToolSep /> },
  { at: 347, w: 46, node: <MeshIcon /> },
  { at: 406, w: 1, node: <ToolSep /> },
  { at: 440, w: 7, node: <Handle /> },
  { at: 465, w: 44, node: <EditsIcon /> },
  { at: 525, w: 33, node: <PencilIcon /> },
  { at: 578, w: 44, node: <SaveEditsIcon /> },
  { at: 636, w: 46, node: <DigitizeIcon /> },
  { at: 697, w: 38, node: <ToolsIcon /> },
  { at: 750, w: 20, node: <DropArrow $off /> },
  { at: 784, w: 42, node: <EditTableIcon /> },
  { at: 842, w: 36, node: <DeleteIcon /> },
  { at: 900, w: 42, node: <ScissorsIcon /> },
  { at: 962, w: 32, node: <CopyIcon /> },
  { at: 1020, w: 32, node: <PasteIcon /> },
  { at: 1076, w: 36, node: <UndoIcon /> },
  { at: 1134, w: 36, node: <RedoIcon /> },
  { at: 1205, w: 7, node: <Handle /> },
  { at: 1226, w: 42, node: <AbcIcon /> },
  { at: 1288, w: 40, node: <DiagramIcon /> },
  { at: 1345, w: 1, node: <ToolSep /> },
  { at: 1359, w: 47, node: <AbPinIcon /> },
  { at: 1461, w: 22, node: <Chevrons /> },
  { at: 1509, w: 7, node: <Handle /> },
  { at: 1530, w: 48, node: <GlobeIcon /> },
  { at: 1607, w: 7, node: <Handle /> },
  { at: 1632, w: 42, node: <PythonIcon /> },
  { at: 1705, w: 7, node: <Handle /> },
  { at: 1730, w: 40, node: <HelpIcon /> },
  { at: 1804, w: 7, node: <Handle /> },
];

const renderRow = (items: Placed[]) => {
  let right = 2;
  return items.map((item) => {
    const gap = item.at - right;
    right = item.at + item.w;
    return (
      <Slot key={item.at} $w={item.w} $gap={gap}>
        {item.node}
      </Slot>
    );
  });
};

const menus: { gap: number; u: number; label: string }[] = [
  { gap: 20, u: -1, label: "Project" },
  { gap: 23, u: 0, label: "Edit" },
  { gap: 24, u: 0, label: "View" },
  { gap: 24, u: 0, label: "Layer" },
  { gap: 22, u: 0, label: "Settings" },
  { gap: 26, u: 0, label: "Plugins" },
  { gap: 25, u: 4, label: "Vector" },
  { gap: 24, u: 0, label: "Raster" },
  { gap: 21, u: 0, label: "Database" },
  { gap: 21.5, u: 0, label: "Web" },
  { gap: 25.5, u: 0, label: "Mesh" },
  { gap: 24, u: -1, label: "MMQGIS" },
  { gap: 28, u: 3, label: "Processing" },
  { gap: 25, u: 0, label: "Help" },
];

const tree = [
  { level: 0, kind: "closed", label: "In-class_Ex06r1" },
  { level: 0, kind: "closed", label: "In-class_Ex07" },
  { level: 0, kind: "open", label: "In-class_Ex08" },
  { level: 1, kind: "closed", label: "AHP" },
  { level: 1, kind: "open", label: "datagov" },
  { level: 2, kind: "open", label: "geospatial" },
  { level: 3, kind: "leaf", label: "G_MP14_LANDUSE" },
  { level: 3, kind: "leaf", label: "MP14_PLNG_AREA" },
];

const outline =
  "1392,303 1432,379 1445,416 1460,486 1478,600 1490,678 1499,723 1517,792 1552,867 1593,930 1643,1007 1736,1143 1637,1181 1634,1180 1622,1182 1621,1184 1600,1188 1540,1187 1529,1183 1512,1161 1494,1146 1455,1161 1440,1173 1429,1199 1417,1256 1451,1308 1451,1345 1447,1341 1443,1325 1422,1323 1401,1363 1371,1405 1357,1416 1327,1422 1316,1417 1290,1419 1258,1417 1212,1447 1184,1405 1155,1437 994,1387 1028,1272 925,1320 928,1558 920,1555 911,1553 902,1554 896,1546 894,1534 887,1524 871,1518 874,1510 874,1495 868,1483 803,1486 791,1175 783,1136 769,1091 752,1063 732,1040 696,1007 670,985 618,946 635,930 741,829 785,786 812,753 829,723 848,678 863,627 874,600 891,572 940,508 955,496 982,481 1003,474 1040,466 1062,457 1140,412 1188,390 1258,359 1284,350 1366,315";

export default function App() {
  return (
    <Screen>
      <GlobalStyle />
      <TopStrip>
        <TerminalPeek>
          <PeekWord $color="#5b9bd5" $gap={29}>SEA_th</PeekWord>
          <PeekWord $color="#c0c850" $gap={85}>Layer</PeekWord>
          <PeekWord $color="#c0c850" $gap={35}>from</PeekWord>
          <PeekWord $color="#e0a060" $gap={43}>**Layers**</PeekWord>
          <PeekWord $color="#c0c850" $gap={61}>name</PeekWord>
        </TerminalPeek>
        <DesktopPeek />
      </TopStrip>
      <Body>
        <LeftEdge />
        <Window>
          <TitleBar>
            <QgisLogo />
            <TitleText>*Hands-on_Ex08 — QGIS</TitleText>
            <WinControls>
              <WinButton>
                <svg width={20} height={20} viewBox="0 0 20 20">
                  <path d="M0 10 H20" stroke="#8a8a8a" strokeWidth={1.6} />
                </svg>
              </WinButton>
              <WinButton>
                <svg width={20} height={20} viewBox="0 0 20 20">
                  <rect x={1} y={1} width={18} height={18} fill="none" stroke="#8a8a8a" strokeWidth={1.6} />
                </svg>
              </WinButton>
              <WinButton>
                <svg width={20} height={20} viewBox="0 0 20 20">
                  <path d="M1 1 L19 19 M19 1 L1 19" stroke="#8a8a8a" strokeWidth={1.5} />
                </svg>
              </WinButton>
            </WinControls>
          </TitleBar>

          <MenuBar>
            {menus.map(({ gap, u, label }) => (
              <MenuItem key={label} $gap={gap}>
                {u < 0 ? (
                  label
                ) : (
                  <>
                    {label.slice(0, u)}
                    <u>{label[u]}</u>
                    {label.slice(u + 1)}
                  </>
                )}
              </MenuItem>
            ))}
          </MenuBar>

          <Toolbar $h={75}>{renderRow(row1)}</Toolbar>
          <Toolbar $h={75}>{renderRow(row2)}</Toolbar>

          <Main>
            <Dock>
              <DockTitle>
                Browser
                <FloatCloseButtons />
              </DockTitle>
              <DockIcons $h={50} $top={1}>
                <Small w={30} gap={15}>
                  <rect x={1} y={2} width={23} height={23} fill="#fff" stroke="#8a8a8a" strokeWidth={1.8} />
                  <PlusBadge x={18} y={20} />
                </Small>
                <Small w={28} gap={13}>
                  <path d="M3 15 C5 5 17 2 23 8 L27 3 V16 H14 L19 11 C15 8 9 9 7 15 Z" fill="#4f8fd0" stroke="#2f6aa8" />
                  <path d="M25 20 C23 30 11 33 5 27 L1 32 V19 H14 L9 24 C13 27 19 26 21 20 Z" fill="#4f8fd0" stroke="#2f6aa8" />
                </Small>
                <Small w={28} gap={14}>
                  <FunnelShape />
                </Small>
                <Small w={30} gap={13}>
                  <TreeArrowsIcon />
                </Small>
                <Small w={27} gap={12}>
                  <circle cx={13.5} cy={17} r={12.5} fill="#5e8fc7" stroke="#3f6ea3" />
                  <text x={13.5} y={25} textAnchor="middle" fontFamily="Liberation Serif, serif" fontStyle="italic" fontWeight={700} fontSize={23} fill="#fff">
                    i
                  </text>
                </Small>
              </DockIcons>

              <TreeFrame>
                <TreeView>
                  {tree.map(({ level, kind, label }) => (
                    <TreeRow key={label} $level={level}>
                      <ExpandCell>
                        {kind === "closed" && <ArrowRight />}
                        {kind === "open" && <ArrowDown />}
                      </ExpandCell>
                      {kind === "closed" && <FolderClosed />}
                      {kind === "open" && <FolderOpen />}
                      {kind === "leaf" && <PolygonLeaf />}
                      {kind === "leaf" ? <LeafLabel>{label}</LeafLabel> : <RowLabel>{label}</RowLabel>}
                    </TreeRow>
                  ))}
                </TreeView>
                <ScrollColumn>
                  <ScrollPart $size={33}>
                    <ArrowUp />
                  </ScrollPart>
                  <ScrollPart $size={75} $grey />
                  <ScrollPart $size={65} />
                  <ScrollPart $size={113} $grey />
                  <ScrollPart $size={35}>
                    <ArrowDown />
                  </ScrollPart>
                </ScrollColumn>
                <ScrollRow>
                  <ScrollPart $size={33} $horizontal>
                    <ArrowLeft />
                  </ScrollPart>
                  <ScrollPart $size={245} $horizontal />
                  <ScrollPart $size={156} $horizontal $grey />
                  <ScrollPart $size={34} $horizontal>
                    <ArrowSmallRight />
                  </ScrollPart>
                </ScrollRow>
                <ScrollCorner />
              </TreeFrame>

              <TabBar>
                <Tab $w={200}>Layer Order</Tab>
                <Tab $w={155} $active>
                  Browser
                </Tab>
                <TabFill />
              </TabBar>

              <SplitterRow>
                <SplitterDots />
              </SplitterRow>

              <DockTitle>
                Layers
                <FloatCloseButtons />
              </DockTitle>
              <DockIcons $h={50} $top={4}>
                <Small w={30} gap={14}>
                  <path d="M2 17 L12 12 L19 23 L10 28 Z" fill="#d9a066" stroke="#b57a3c" />
                  <path d="M2 17 L10 9 L15 13 Z" fill="#f0c020" />
                  <path d="M2 17 L10 28 L1 22 Z" fill="#d04040" />
                  <path d="M15 17 L28 4" stroke="#d89a3c" strokeWidth={3.6} />
                </Small>
                <Small w={28} gap={13}>
                  <path d="M1 28 V15 H8 M1 28 H10" fill="none" stroke="#8a8a8a" strokeWidth={1.6} />
                  <rect x={6} y={8} width={20} height={21} fill="none" stroke="#8a8a8a" strokeWidth={1.8} />
                  <path d="M12 22 V6 C12 1 20 1 20 6 V22" fill="none" stroke="#666" strokeWidth={2} />
                  <PlusBadge x={17} y={20} />
                </Small>
                <Small w={30} gap={13}>
                  <path d="M1 15 C8 5 20 5 29 13 C22 24 8 25 1 15 Z" fill="#fff" stroke="#999" strokeWidth={1.6} />
                  <circle cx={15} cy={15} r={7.5} fill="#5e8fc7" />
                  <circle cx={15} cy={13} r={3} fill="#1c2a3c" />
                  <path d="M17 20 H31 L24 28 Z" fill="#555" />
                </Small>
                <Small w={29} gap={13}>
                  <FunnelShape withArrow />
                </Small>
                <Small w={28} gap={13}>
                  <g transform="translate(0 2) scale(0.68)">
                    <Epsilon />
                  </g>
                  <path d="M13 23 H28 L26 34 H22 L20.5 28 L19 34 H15 Z" fill="#9a9a9a" />
                </Small>
                <ArrowSlot $w={20} $gap={9}>
                  <ArrowDown />
                </ArrowSlot>
                <Small w={30} gap={13}>
                  <TreeArrowsIcon down />
                </Small>
                <Small w={30} gap={12}>
                  <TreeArrowsIcon />
                </Small>
                <Small w={28} gap={11}>
                  <rect x={1} y={2} width={22} height={23} fill="#fff" stroke="#8a8a8a" strokeWidth={1.8} />
                  <PlusBadge x={16} y={20} minus />
                </Small>
              </DockIcons>
              <LayerFrame>
                <LayerRow>
                  <LayerCheck>
                    <Check />
                  </LayerCheck>
                  <LayerSwatch />
                  <LayerName>LSA Gombak</LayerName>
                </LayerRow>
              </LayerFrame>
              <DockGrip />
            </Dock>

            <MapCanvas>
              <MapSvg viewBox="524 272 1303 1317" preserveAspectRatio="none">
                <polygon points={outline} fill="#c9fd98" stroke="#232323" strokeWidth={1.8} strokeLinejoin="round" />
              </MapSvg>
            </MapCanvas>
          </Main>

          <StatusBar>
            <Locator>
              <svg width={32} height={34} viewBox="0 0 32 34">
                <circle cx={13} cy={13} r={10.5} fill="none" stroke="#8c8c8c" strokeWidth={2.6} />
                <path d="M20 21 L30 32" stroke="#8c8c8c" strokeWidth={3.4} />
              </svg>
              <LocatorHint>Type to locate (Ctrl+K)</LocatorHint>
            </Locator>
            <SliverLabel $gap={86} $w={6}>:</SliverLabel>
            <StatusField $w={172}>
              <FieldText>19430,37834</FieldText>
            </StatusField>
            <StatusItem $gap={5}>
              <svg width={40} height={42} viewBox="0 0 40 42">
                <path d="M6 6 C10 0 20 2 26 16 C32 28 30 36 24 39 C16 42 12 34 8 24 C4 16 2 12 6 6 Z" fill="#fff" stroke="#111" strokeWidth={3.2} />
                <path d="M14 4 L20 22 M8 16 L26 12" stroke="#111" strokeWidth={3} />
                <circle cx={22} cy={31} r={3.5} fill="none" stroke="#111" strokeWidth={2.4} />
                <path d="M30 4 L33 2 M33 9 L37 8 M28 1 L28 0" stroke="#111" strokeWidth={1.6} />
              </svg>
            </StatusItem>
            <SliverLabel $gap={12} $w={6}>a</SliverLabel>
            <StatusField $w={179} $gap={1}>
              <FieldText>1:17275</FieldText>
              <ComboDrop>
                <SpinDown />
              </ComboDrop>
            </StatusField>
            <StatusItem $gap={15}>
              <svg width={31} height={40} viewBox="0 0 31 40">
                <path d="M6 18 V11 C6 -1 25 -1 25 11 V18" fill="none" stroke="#bcbcbc" strokeWidth={3.4} />
                <rect x={0} y={17} width={31} height={23} rx={4} fill="#6c6c6c" />
              </svg>
            </StatusItem>
            <SliverLabel $gap={8} $w={4} $start>r</SliverLabel>
            <StatusField $w={160} $gap={6} $size={28}>
              <FieldText>100%</FieldText>
              <SpinBox>
                <SpinUp />
                <SpinDown />
              </SpinBox>
            </StatusField>
            <SliverLabel $gap={6} $w={6}>a</SliverLabel>
            <StatusField $w={136} $gap={11} $size={28.5}>
              <FieldText>0.0 °</FieldText>
              <SpinBox>
                <SpinUp />
                <SpinDown />
              </SpinBox>
            </StatusField>
            <StatusItem $gap={8}>
              <RenderCheck>
                <Check />
              </RenderCheck>
            </StatusItem>
            <StatusItem $gap={15}>
              <FieldText>Render</FieldText>
            </StatusItem>
            <StatusItem $gap={15}>
              <svg width={26} height={26} viewBox="0 0 26 26">
                <g fill="none" stroke="#8a8a8a" strokeWidth={1.4}>
                  <circle cx={13} cy={13} r={11} />
                  <ellipse cx={13} cy={13} rx={5} ry={11} />
                  <path d="M2 13 H24 M4 7 H22 M4 19 H22 M13 2 V24" />
                </g>
              </svg>
            </StatusItem>
            <StatusItem $gap={5} $size={27.5}>
              <FieldText>EPSG:3414</FieldText>
            </StatusItem>
            <StatusItem $gap={50}>
              <svg width={28} height={30} viewBox="0 0 28 30">
                <path d="M14 1 C22 1 27 6 27 13 C27 20 22 24 17 24 L21 29 C16 28 12 26 10 24 C4 23 1 19 1 13 C1 6 6 1 14 1 Z" fill="#6c6c6c" />
                <circle cx={8} cy={13} r={2} fill="#fff" />
                <circle cx={14} cy={13} r={2} fill="#fff" />
                <circle cx={20} cy={13} r={2} fill="#fff" />
              </svg>
            </StatusItem>
            <ResizeGrip />
          </StatusBar>
        </Window>
      </Body>
    </Screen>
  );
}
